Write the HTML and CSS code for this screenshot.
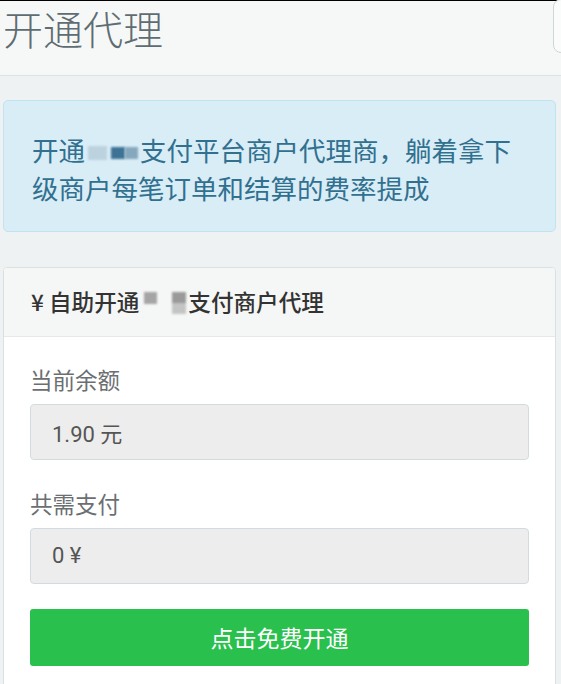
FILE: index.html
```html
<!DOCTYPE html>
<html lang="zh-CN">
<head>
    <meta charset="UTF-8">
    <meta name="viewport" content="width=device-width, initial-scale=1.0">
    <title>开通代理</title>
    <link rel="stylesheet" href="styles.css">
</head>
<body>

<div class="topbar">
    <h1>开通代理</h1>
    <div class="corner"></div>
</div>

<div class="page">
    <div class="alert">
        开通<span class="mask mask-a"><i class="m1"></i><i class="m2"></i><i class="m3"></i></span>支付平台商户代理商，躺着拿下<br>级商户每笔订单和结算的费率提成
    </div>

    <div class="panel">
        <div class="panel-heading">
            ¥ 自助开通<span class="mask mask-b"><i class="m4"></i><i class="m5"></i></span>支付商户代理
        </div>
        <div class="panel-body">
            <label for="balance">当前余额</label>
            <input type="text" id="balance" value="1.90 元" disabled>
            <label for="pay" class="second">共需支付</label>
            <input type="text" id="pay" value="0 ¥" disabled>
            <button>点击免费开通</button>
        </div>
    </div>
</div>

</body>
</html>
```

FILE: styles.css
```css
body {
    margin: 0;
    font-family: "Noto Sans CJK SC", "Noto Sans", sans-serif;
    background-color: #eef2f3;
    width: 561px;
    height: 684px;
    overflow: hidden;
}
.topbar {
    position: relative;
    height: 74px;
    border-top: 1px solid #000;
    border-bottom: 1px solid #dde3e5;
    background-color: #f6f8f8;
}
.topbar h1 {
    margin: 0;
    padding: 0 0 0 3px;
    font-size: 40px;
    font-weight: 300;
    line-height: 54px;
    color: #5f6c72;
}
.corner {
    position: absolute;
    top: -2px;
    right: -10px;
    width: 16px;
    height: 52px;
    background-color: #fafbfb;
    border: 1px solid #cfd6d8;
    border-radius: 8px;
}
.page {
    padding: 24px 5px 0 3px;
}
.alert {
    background-color: #d9edf7;
    border: 1px solid #bfe3ef;
    border-radius: 5px;
    color: #31708f;
    font-size: 26.5px;
    line-height: 37px;
    padding: 30px 10px 25px 28px;
    margin-bottom: 35px;
}
.mask {
    display: inline-block;
    position: relative;
    vertical-align: middle;
}
.mask i {
    position: absolute;
    display: block;
    filter: blur(1px);
}
.mask-a {
    width: 55px;
    height: 30px;
}
.m1 { left: 3px; top: 7px; width: 19px; height: 14px; background: #bcd2de; }
.m2 { left: 26px; top: 8px; width: 14px; height: 12px; background: #3f7396; }
.m3 { left: 40px; top: 8px; width: 13px; height: 12px; background: #86a8bd; }
.panel {
    background-color: #fff;
    border: 1px solid #dbe0e2;
    border-radius: 4px;
    overflow: hidden;
}
.panel-heading {
    background-color: #f5f6f6;
    border-bottom: 1px solid #e6e9ea;
    height: 68px;
    padding-left: 27px;
    font-size: 22.6px;
    font-weight: 500;
    line-height: 68px;
    color: #333;
}
.mask-b {
    width: 49px;
    height: 26px;
}
.m4 { left: 5px; top: 0; width: 13px; height: 12px; background: #a5a5a5; }
.m5 { left: 33px; top: 0; width: 14px; height: 22px; background: linear-gradient(#9a9a9a 50%, #c4c4c4 50%); }
.panel-body {
    padding: 27px 26px 40px;
}
.panel-body label {
    display: block;
    font-size: 22.5px;
    line-height: 30px;
    color: #6b6f72;
    margin-bottom: 10px;
}
.panel-body label.second {
    margin-top: 28px;
}
.panel-body input {
    display: block;
    width: 100%;
    height: 56px;
    box-sizing: border-box;
    padding: 0 21px;
    font-family: "Roboto", "Noto Sans CJK SC", sans-serif;
    font-size: 22px;
    color: #555;
    background-color: #ededed;
    border: 1px solid #d2dcdf;
    border-radius: 4px;
}
.panel-body button {
    display: block;
    width: 100%;
    height: 57px;
    margin-top: 25px;
    background-color: #29c04d;
    color: #fff;
    border: none;
    border-radius: 3px;
    font-family: "Noto Sans CJK SC", sans-serif;
    font-size: 23px;
    cursor: pointer;
}
```
